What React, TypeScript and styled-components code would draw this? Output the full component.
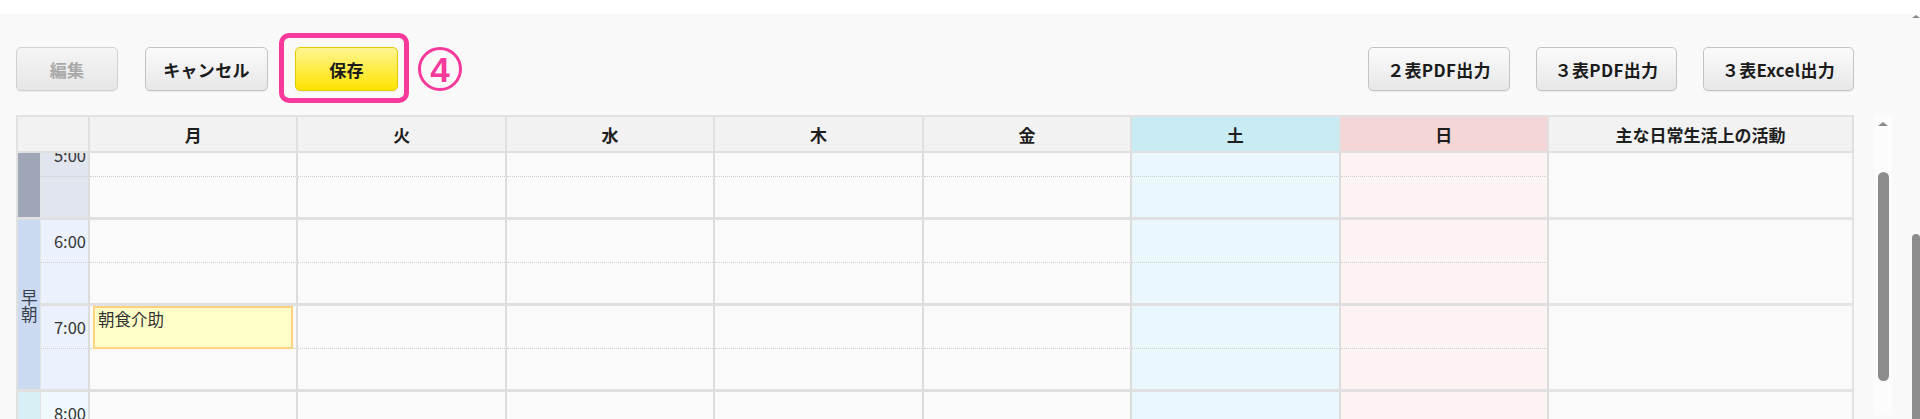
import React, { useLayoutEffect, useRef } from "react";
import styled, { createGlobalStyle, css } from "styled-components";

const GlobalStyle = createGlobalStyle`
  html, body { margin: 0; padding: 0; overflow: hidden; background: #fff; }
  body { font-family: "Noto Sans CJK JP", "Noto Sans", sans-serif; color: #222; }
  *, *::before, *::after { box-sizing: border-box; }
`;

const Page = styled.div`
  display: flex;
  flex-direction: column;
  height: 100vh;
`;

const TopBand = styled.div`
  flex: none;
  height: 14px;
  background: #fff;
`;

const Frame = styled.div`
  flex: 1;
  min-height: 0;
  display: flex;
  background: #f9f9f9;
  overflow: hidden;
`;

const Main = styled.div`
  flex: 1;
  min-width: 0;
  display: flex;
  flex-direction: column;
  gap: 24px;
  padding: 33px 0 0 16px;
`;

const Toolbar = styled.div`
  width: 1838px;
  height: 44px;
  display: flex;
  align-items: center;
  justify-content: space-between;
`;

const ButtonGroup = styled.div<{ $gap: number }>`
  display: flex;
  align-items: center;
  gap: ${(p) => p.$gap}px;
`;

type Variant = "default" | "disabled" | "primary";

const Button = styled.button<{ $w: number; $variant?: Variant }>`
  width: ${(p) => p.$w}px;
  height: 44px;
  border-radius: 5px;
  border: 1px solid #c3c3c3;
  background: linear-gradient(#fbfbfb, #e7e7e7);
  color: #1b1b1b;
  font-family: "Noto Sans CJK JP", "Noto Sans", sans-serif;
  font-size: 17px;
  font-weight: 700;
  letter-spacing: 0.3px;
  padding: 0;
  box-shadow: 0 1px 1px rgba(0, 0, 0, 0.06);
  ${(p) =>
    p.$variant === "disabled" &&
    css`
      color: #a9a9a9;
      border-color: #d0d0d0;
      background: linear-gradient(#f5f5f5, #e6e6e6);
    `}
  ${(p) =>
    p.$variant === "primary" &&
    css`
      border-color: #e3cb00;
      background: linear-gradient(#fff591, #ffe300);
    `}
`;

const Highlight = styled.div`
  position: relative;
  display: flex;
  &::after {
    content: "";
    position: absolute;
    top: -14px;
    bottom: -12px;
    left: -16px;
    right: -11px;
    border: 5px solid #f63a9b;
    border-radius: 10px;
    pointer-events: none;
  }
`;

const StepMark = styled.span`
  width: 44px;
  height: 44px;
  border: 3px solid #f63a9b;
  border-radius: 50%;
  color: #f63a9b;
  display: flex;
  align-items: center;
  justify-content: center;
  font-family: "Liberation Sans", "Noto Sans", sans-serif;
  font-weight: 700;
  font-size: 35px;
  line-height: 1;
`;

const TableArea = styled.div`
  display: flex;
  align-items: flex-start;
`;

const Table = styled.div`
  width: 1838px;
  flex: none;
  border-left: 2px solid #e1e1e1;
`;

const COLS = "23px 49px repeat(7, 1fr) 305px";

const HeaderRow = styled.div`
  display: grid;
  grid-template-columns: ${COLS};
  height: 38px;
  border-top: 2px solid #e2e2e2;
  border-bottom: 2px solid #e0e0e0;
`;

type Tone = "plain" | "sat" | "sun";

const headBg: Record<Tone, string> = { plain: "#f2f2f2", sat: "#c9ecf4", sun: "#f4d6d7" };
const bodyBg: Record<Tone, string> = { plain: "#fafafa", sat: "#eaf8fd", sun: "#fdf3f3" };

const HeadCell = styled.div<{ $tone: Tone; $span?: number }>`
  grid-column: span ${(p) => p.$span ?? 1};
  background: ${(p) => headBg[p.$tone]};
  border-right: 2px solid #e0e0e0;
  display: flex;
  align-items: center;
  justify-content: center;
  font-size: 17px;
  font-weight: 700;
  color: #1e1e1e;
`;

const BodyViewport = styled.div`
  height: 380px;
  overflow: hidden;
`;

const BodyGrid = styled.div`
  display: grid;
  grid-template-columns: ${COLS};
  grid-auto-rows: 43px;
`;

const BandCell = styled.div<{ $row: number; $span: number; $bg: string }>`
  grid-column: 1;
  grid-row: ${(p) => p.$row} / span ${(p) => p.$span};
  background: ${(p) => p.$bg};
  border-right: 1px solid #e3e3e3;
  border-bottom: 3px solid #e0e0e0;
  display: flex;
  align-items: center;
  justify-content: center;
  writing-mode: vertical-rl;
  text-orientation: upright;
  font-size: 16.5px;
  line-height: 1;
  letter-spacing: 1px;
  color: #3a3f4c;
  padding-top: 4px;
`;

const TimeCell = styled.div<{ $row: number; $bg: string }>`
  grid-column: 2;
  grid-row: ${(p) => p.$row} / span 2;
  background: ${(p) => p.$bg};
  border-right: 2px solid #dcdcdc;
  border-bottom: 3px solid #e0e0e0;
`;

const TimeLabel = styled.div`
  height: 43px;
  border-bottom: 1px dotted #cfcfcf;
  display: flex;
  align-items: center;
  justify-content: flex-end;
  padding-right: 2px;
  font-size: 16.5px;
  color: #333;
`;

const DayCell = styled.div<{ $tone: Tone; $half: number; $col: number; $row: number }>`
  grid-column: ${(p) => p.$col};
  grid-row: ${(p) => p.$row};
  background: ${(p) => bodyBg[p.$tone]};
  border-right: 2px solid #dcdcdc;
  border-bottom: ${(p) => (p.$half === 0 ? "1px dotted #cfcfcf" : "3px solid #e0e0e0")};
  display: flex;
  padding: 0 3px 0 3px;
`;

const ActivityCell = styled.div<{ $row: number }>`
  grid-column: 10;
  grid-row: ${(p) => p.$row} / span 2;
  background: #fafafa;
  border-right: 2px solid #e2e2e2;
  border-bottom: 3px solid #e4e4e4;
`;

const EventBox = styled.div`
  flex: 1;
  height: 43px;
  background: #ffffc8;
  border: 2px solid #ffd27e;
  padding: 0 3px;
  font-size: 16.5px;
  line-height: 22px;
  color: #333;
`;

const InnerScroll = styled.div`
  flex: none;
  margin-left: 20px;
  width: 18px;
  height: 300px;
  background: #fcfcfc;
  display: flex;
  flex-direction: column;
  align-items: center;
  padding-top: 7px;
`;

const UpArrow = styled.div<{ $size: number }>`
  width: 0;
  height: 0;
  border-left: ${(p) => p.$size}px solid transparent;
  border-right: ${(p) => p.$size}px solid transparent;
  border-bottom: ${(p) => p.$size * 0.9}px solid #8a8a8a;
`;

const Thumb = styled.div<{ $top: number; $h: number; $w: number }>`
  margin-top: ${(p) => p.$top}px;
  width: ${(p) => p.$w}px;
  height: ${(p) => p.$h}px;
  border-radius: ${(p) => p.$w / 2}px;
  background: #8c8c8c;
  flex: none;
`;

const PageScroll = styled.div`
  flex: none;
  width: 15px;
  display: flex;
  flex-direction: column;
  align-items: flex-end;
  padding-top: 1px;
`;

const PageArrowSlot = styled.div`
  width: 9px;
  display: flex;
  justify-content: center;
`;

const days: { label: string; tone: Tone }[] = [
  { label: "月", tone: "plain" },
  { label: "火", tone: "plain" },
  { label: "水", tone: "plain" },
  { label: "木", tone: "plain" },
  { label: "金", tone: "plain" },
  { label: "土", tone: "sat" },
  { label: "日", tone: "sun" },
];

const bands = [
  { start: 5, hours: 1, band: "#9fa6b7", time: "#e1e5ed", label: "" },
  { start: 6, hours: 2, band: "#cbd9f1", time: "#ebf2fe", label: "早朝" },
  { start: 8, hours: 4, band: "#d9eff6", time: "#eff9fd", label: "" },
];

const HOURS = [5, 6, 7, 8, 9, 10, 11];

function bandFor(h: number) {
  return bands.find((b) => h >= b.start && h < b.start + b.hours)!;
}

export default function App() {
  const bodyRef = useRef<HTMLDivElement>(null);
  useLayoutEffect(() => {
    if (bodyRef.current) bodyRef.current.scrollTop = 19;
  }, []);

  return (
    <>
      <GlobalStyle />
      <Page>
        <TopBand />
        <Frame>
          <Main>
            <Toolbar>
              <ButtonGroup $gap={27}>
                <Button $w={102} $variant="disabled">編集</Button>
                <Button $w={123}>キャンセル</Button>
                <ButtonGroup $gap={20}>
                  <Highlight>
                    <Button $w={103} $variant="primary">保存</Button>
                  </Highlight>
                  <StepMark>4</StepMark>
                </ButtonGroup>
              </ButtonGroup>
              <ButtonGroup $gap={26}>
                <Button $w={142}>２表PDF出力</Button>
                <Button $w={141}>３表PDF出力</Button>
                <Button $w={151}>３表Excel出力</Button>
              </ButtonGroup>
            </Toolbar>
            <TableArea>
              <Table>
                <HeaderRow>
                  <HeadCell $tone="plain" $span={2} />
                  {days.map((d) => (
                    <HeadCell key={d.label} $tone={d.tone}>
                      {d.label}
                    </HeadCell>
                  ))}
                  <HeadCell $tone="plain">主な日常生活上の活動</HeadCell>
                </HeaderRow>
                <BodyViewport ref={bodyRef}>
                  <BodyGrid>
                    {bands.map((b) => (
                      <BandCell
                        key={b.start}
                        $row={(b.start - 5) * 2 + 1}
                        $span={b.hours * 2}
                        $bg={b.band}
                      >
                        {b.label}
                      </BandCell>
                    ))}
                    {HOURS.map((h) => {
                      const row = (h - 5) * 2 + 1;
                      const b = bandFor(h);
                      return (
                        <React.Fragment key={h}>
                          <TimeCell $row={row} $bg={b.time}>
                            <TimeLabel>{h}:00</TimeLabel>
                          </TimeCell>
                          {[0, 1].map((half) =>
                            days.map((d, i) => (
                              <DayCell
                                key={`${h}-${half}-${i}`}
                                $tone={d.tone}
                                $half={half}
                                $col={i + 3}
                                $row={row + half}
                              >
                                {h === 7 && half === 0 && i === 0 && <EventBox>朝食介助</EventBox>}
                              </DayCell>
                            ))
                          )}
                          <ActivityCell $row={row} />
                        </React.Fragment>
                      );
                    })}
                  </BodyGrid>
                </BodyViewport>
              </Table>
              <InnerScroll>
                <UpArrow $size={5} />
                <Thumb $top={46} $h={209} $w={11} />
              </InnerScroll>
            </TableArea>
          </Main>
          <PageScroll>
            <PageArrowSlot>
              <UpArrow $size={4} />
            </PageArrowSlot>
            <Thumb $top={216} $h={300} $w={8} />
          </PageScroll>
        </Frame>
      </Page>
    </>
  );
}
